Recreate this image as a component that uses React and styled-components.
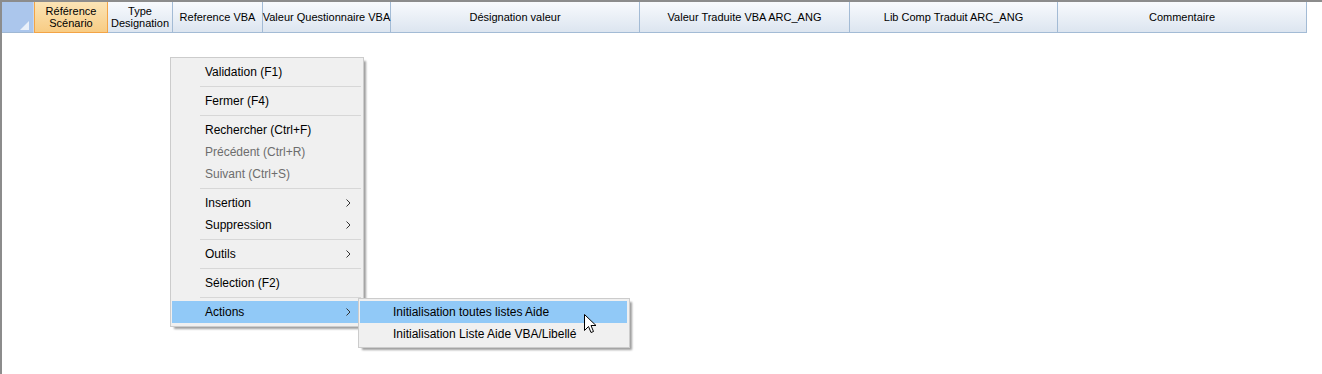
import React from "react";
import styled, { createGlobalStyle, css } from "styled-components";

const Global = createGlobalStyle`
  html, body { margin: 0; padding: 0; background: #ffffff; }
  body { width: 1322px; height: 374px; overflow: hidden; }
  #root { width: 1322px; height: 374px; }
`;

const Page = styled.div`
  position: relative;
  box-sizing: border-box;
  width: 1322px;
  height: 374px;
  background: #ffffff;
  border-top: 2px solid #8c8c8c;
  border-left: 2px solid #8c8c8c;
  font-family: "Liberation Sans", Arial, sans-serif;
`;

const HeaderRow = styled.div`
  display: flex;
  height: 31px;
`;

const Corner = styled.div`
  box-sizing: border-box;
  width: 32px;
  height: 31px;
  display: flex;
  justify-content: flex-end;
  align-items: flex-end;
  padding: 0 4px 2px 0;
  background: #abc6ec;
  border-right: 1px solid #c7d8ef;
  border-bottom: 1px solid #9fb8d4;
`;

const HeaderCell = styled.div`
  box-sizing: border-box;
  width: ${(p) => p.$w}px;
  height: 31px;
  display: flex;
  flex-direction: column;
  align-items: center;
  justify-content: center;
  text-align: center;
  font-size: 11px;
  line-height: 12px;
  color: #000;
  background: linear-gradient(#f8fafd, #dce5f0);
  border-right: 1px solid #a3bbd5;
  border-bottom: 1px solid #a3bbd5;
  white-space: nowrap;
  ${(p) =>
    p.$selected &&
    css`
      background: linear-gradient(#fbe4b6, #f8cc84);
      border-left: 1px solid #f3a446;
      border-right: 1px solid #f3a446;
      border-bottom: 1px solid #f3a446;
    `}
`;

const Menu = styled.div`
  position: absolute;
  left: ${(p) => p.$x}px;
  top: ${(p) => p.$y}px;
  width: ${(p) => p.$w}px;
  box-sizing: border-box;
  display: flex;
  flex-direction: column;
  background: #f0f0f0;
  border: 1px solid #cccccc;
  padding: ${(p) => p.$pad};
  box-shadow: 3px 3px 2px -1px rgba(0, 0, 0, 0.38);
  font-family: "Liberation Sans", Arial, sans-serif;
  font-size: 12px;
`;

const Item = styled.div`
  height: 22px;
  display: flex;
  align-items: center;
  padding-left: 33px;
  padding-right: 10px;
  color: ${(p) => (p.$disabled ? "#6d6d6d" : "#000000")};
  background: ${(p) => (p.$active ? "#91c9f7" : "transparent")};
  white-space: nowrap;
`;

const Label = styled.span`
  flex: 1;
`;

const Separator = styled.div`
  height: 7px;
  display: flex;
  align-items: center;
  padding-left: 28px;
  &::after {
    content: "";
    flex: 1;
    height: 1px;
    background: #d7d7d7;
  }
`;

const Cursor = styled.svg`
  position: absolute;
  left: 582px;
  top: 312px;
`;

const columns = [
  { w: 74, label: ["Référence", "Scénario"], selected: true },
  { w: 65, label: ["Type", "Designation"] },
  { w: 90, label: ["Reference VBA"] },
  { w: 128, label: ["Valeur Questionnaire VBA"] },
  { w: 249, label: ["Désignation valeur"] },
  { w: 210, label: ["Valeur Traduite VBA ARC_ANG"] },
  { w: 208, label: ["Lib Comp Traduit ARC_ANG"] },
  { w: 249, label: ["Commentaire"] },
];

const menu = [
  { t: "Validation (F1)" },
  { sep: true },
  { t: "Fermer (F4)" },
  { sep: true },
  { t: "Rechercher (Ctrl+F)" },
  { t: "Précédent (Ctrl+R)", disabled: true },
  { t: "Suivant (Ctrl+S)", disabled: true },
  { sep: true },
  { t: "Insertion", sub: true },
  { t: "Suppression", sub: true },
  { sep: true },
  { t: "Outils", sub: true },
  { sep: true },
  { t: "Sélection (F2)" },
  { sep: true },
  { t: "Actions", sub: true, active: true },
];

const ChevronIcon = () => (
  <svg width="5" height="8" viewBox="0 0 5 8">
    <polyline points="0.5,0.5 4,4 0.5,7.5" fill="none" stroke="#333" strokeWidth="1" />
  </svg>
);

export default function App() {
  return (
    <>
      <Global />
      <Page>
        <HeaderRow>
          <Corner>
            <svg width="9" height="9" viewBox="0 0 9 9">
              <polygon points="9,0 9,9 0,9" fill="#e9f0fa" />
            </svg>
          </Corner>
          {columns.map((c, i) => (
            <HeaderCell key={i} $w={c.w} $selected={c.selected}>
              {c.label.map((l, j) => (
                <span key={j}>{l}</span>
              ))}
            </HeaderCell>
          ))}
        </HeaderRow>

        <Menu $x={168} $y={55} $w={194} $pad="3px 2px 3px 1px">
          {menu.map((m, i) =>
            m.sep ? (
              <Separator key={i} />
            ) : (
              <Item key={i} $disabled={m.disabled} $active={m.active}>
                <Label>{m.t}</Label>
                {m.sub && <ChevronIcon />}
              </Item>
            )
          )}
        </Menu>

        <Menu $x={356} $y={296} $w={272} $pad="2px 2px 2px 1px">
          <Item $active>
            <Label>Initialisation toutes listes Aide</Label>
          </Item>
          <Item>
            <Label>Initialisation Liste Aide VBA/Libellé</Label>
          </Item>
        </Menu>

        <Cursor width="13" height="21" viewBox="0 0 13 21">
          <path
            d="M0.5,0.5 L0.5,16.5 L4.5,12.5 L7,18.5 L9.5,17.5 L7,11.5 L12,11.5 Z"
            fill="#ffffff"
            stroke="#000000"
            strokeWidth="1"
            strokeLinejoin="miter"
          />
        </Cursor>
      </Page>
    </>
  );
}
